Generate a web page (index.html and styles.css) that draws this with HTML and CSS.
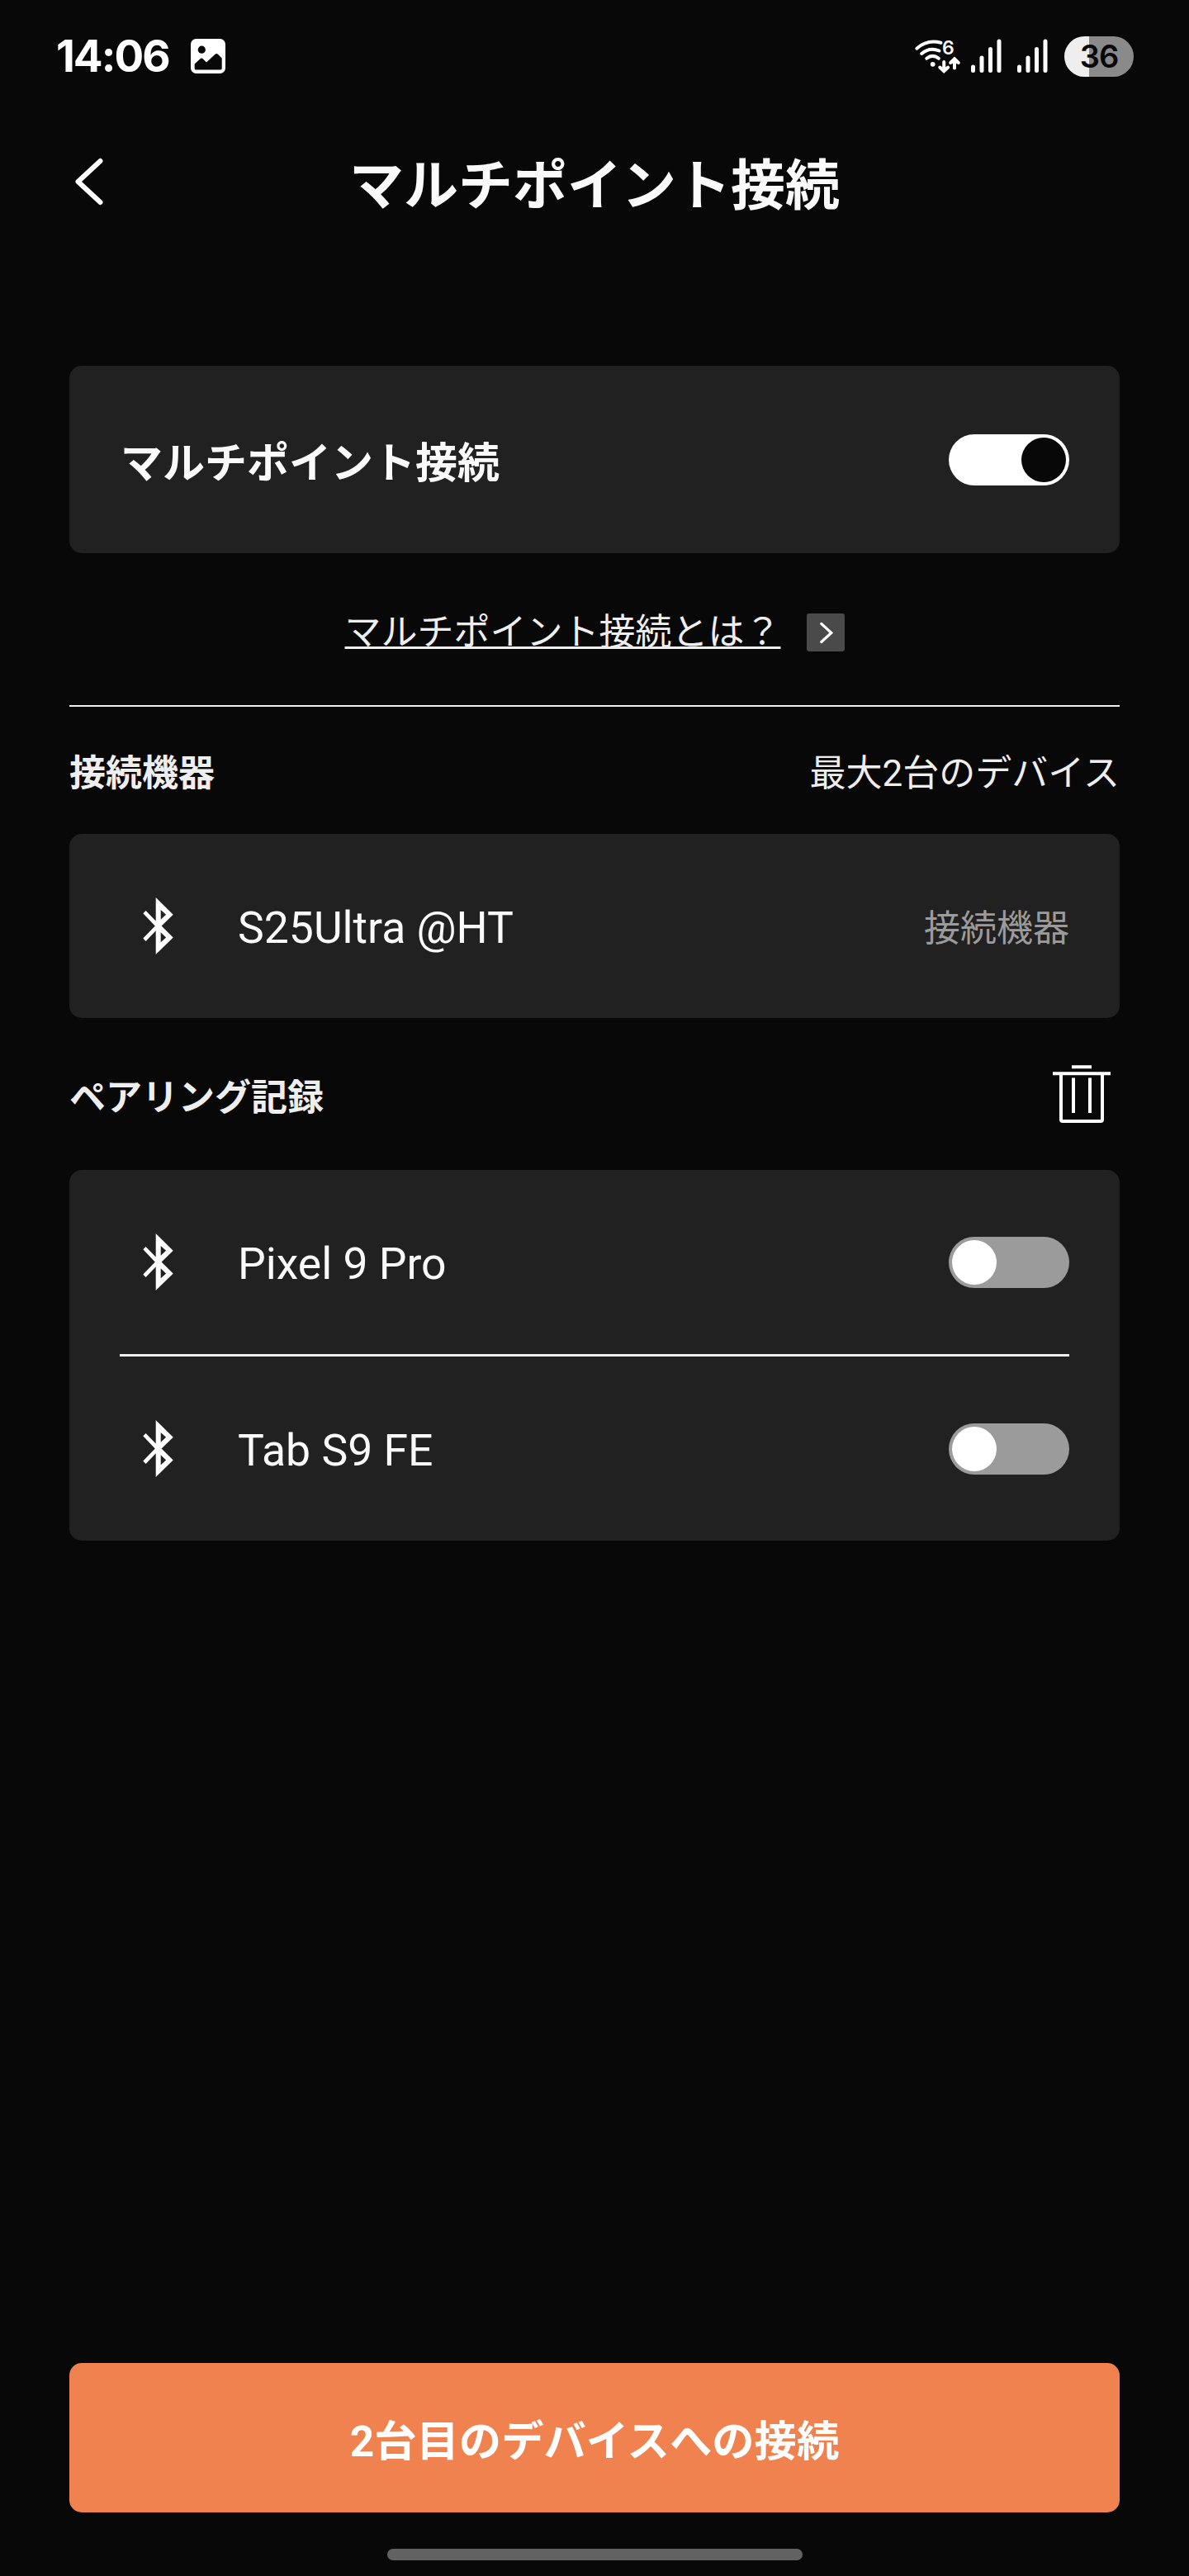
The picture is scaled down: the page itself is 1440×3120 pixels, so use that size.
FILE: index.html
```
<!DOCTYPE html>
<html lang="ja">
<head>
<meta charset="UTF-8">
<meta name="viewport" content="width=device-width, initial-scale=1.0">
<title>マルチポイント接続</title>
<link rel="stylesheet" href="styles.css">
</head>
<body>

<svg class="symbols" width="0" height="0">
    <symbol id="bluetooth" viewBox="0 0 36.4 69">
        <path fill="#fff" fill-rule="evenodd" d="M15.4 0L36.4 20.7 22.3 34.5 36.4 48.5 15.4 69V40.3L3.3 53 0 49.6 14.5 34.5 0 19.3 3.3 16 15.4 28.5ZM21.4 14.9V26.8L27.8 20.7ZM21.4 42.2V54.2L27.8 48.4Z"/>
    </symbol>
    <symbol id="signal" viewBox="0 0 37 42">
        <path stroke="#fff" stroke-width="5" stroke-linecap="round" d="M2.5 34V38.5M13 23V38.5M23.5 12.5V38.5M34 3V38.5"/>
    </symbol>
</svg>

<div class="status-bar">
    <div class="clock">14:06</div>
    <svg class="picture-icon" width="42" height="42" viewBox="0 0 42 42">
        <rect width="42" height="42" rx="6.5" fill="#fff"/>
        <circle cx="13.3" cy="13.2" r="4.6" fill="#080808"/>
        <path fill="#080808" d="M4.7 30.5L11.5 24.2Q13.3 22.8 15 24.4L19 28.4 29.5 18.8Q31.2 17.3 32.9 18.8L37.7 23.5V36Q37.7 37.6 36 37.6H6.4Q4.7 37.6 4.7 36Z"/>
    </svg>
    <div class="status-icons">
        <svg class="wifi" width="55" height="42" viewBox="0 0 55 42" fill="none" stroke="#fff" stroke-width="4" stroke-linecap="round">
            <path d="M2.3 11.7Q15 .5 31.5 4.8"/>
            <path d="M8.2 18Q17.7 9.8 29.5 14.5"/>
            <path d="M14.3 23.7Q21.5 18 28.8 23.7"/>
            <circle cx="21.7" cy="30.8" r="2.9" fill="#fff" stroke="none"/>
            <path d="M35.2 28V39M30.3 34.5L35.2 39.2 40.2 34.5M48 35.5V24.5M43.2 29L48 24.3 52.8 29"/>
            <text class="wifi-gen" x="33" y="18.7">6</text>
        </svg>
        <svg class="signal" width="37" height="42"><use href="#signal"/></svg>
        <svg class="signal" width="37" height="42"><use href="#signal"/></svg>
        <div class="battery">36</div>
    </div>
</div>

<div class="header">
    <svg class="back" width="36" height="58" viewBox="0 0 36 58">
        <path fill="none" stroke="#fff" stroke-width="6" stroke-linecap="round" stroke-linejoin="round" d="M31.5 4L4.5 29 31.5 54"/>
    </svg>
    <h1>マルチポイント接続</h1>
</div>

<div class="content">
    <div class="card">
        <div class="row">
            <div class="label">マルチポイント接続</div>
            <div class="toggle on"></div>
        </div>
    </div>

    <div class="help">
        <a class="help-link">マルチポイント接続とは？</a>
        <svg width="46" height="46" viewBox="0 0 46 46">
            <rect width="46" height="46" rx="3" fill="#4a4a4a"/>
            <path fill="none" stroke="#fff" stroke-width="3.2" stroke-linecap="round" d="M17.8 12.5L29.8 23.5 17.8 34.5"/>
        </svg>
    </div>

    <div class="section-title connected">
        <h2>接続機器</h2>
        <div>最大2台のデバイス</div>
    </div>
    <div class="card">
        <div class="row">
            <svg class="bt" width="37" height="69"><use href="#bluetooth"/></svg>
            <div class="device">S25Ultra @HT</div>
            <div class="state">接続機器</div>
        </div>
    </div>

    <div class="section-title history">
        <h2>ペアリング記録</h2>
        <svg class="trash" width="70" height="70" viewBox="0 0 70 70" fill="none" stroke="#fff" stroke-width="4">
            <path d="M23 2.3H47M0 10.3H70M25 15.5V58M45 15.5V58M10 10V66Q10 68 12 68H58Q60 68 60 66V10"/>
        </svg>
    </div>
    <div class="card">
        <div class="row">
            <svg class="bt" width="37" height="69"><use href="#bluetooth"/></svg>
            <div class="device">Pixel 9 Pro</div>
            <div class="toggle"></div>
        </div>
        <hr>
        <div class="row">
            <svg class="bt" width="37" height="69"><use href="#bluetooth"/></svg>
            <div class="device">Tab S9 FE</div>
            <div class="toggle"></div>
        </div>
    </div>

    <div class="connect-button">2台目のデバイスへの接続</div>
</div>

<div class="nav-handle"></div>

</body>
</html>
```
FILE: styles.css
```
* {
    box-sizing: border-box;
}

body {
    font-family: Roboto, "Noto Sans CJK JP", sans-serif;
    background-color: #080808;
    color: #fafafa;
    display: flex;
    flex-direction: column;
    height: 3120px;
    margin: 0;
}

h1, h2 {
    margin: 0;
    font-weight: bold;
}

svg {
    display: block;
    flex-shrink: 0;
}

.symbols {
    position: absolute;
}

.status-bar {
    display: flex;
    align-items: center;
    height: 136px;
    padding: 0 67px 0 68px;
}

.clock {
    width: 163px;
    font-family: Inter, sans-serif;
    font-size: 53px;
    font-weight: 700;
    line-height: 60px;
    letter-spacing: -2px;
    color: #fff;
}

.status-icons {
    display: flex;
    align-items: center;
    margin-left: auto;
}

.wifi {
    margin-right: 13px;
    overflow: visible;
}

.wifi-gen {
    font-family: Inter, sans-serif;
    font-size: 23px;
    font-weight: 600;
    fill: #fff;
    stroke: none;
}

.signal {
    margin-right: 19px;
}

.battery {
    width: 84px;
    height: 49px;
    margin-left: 1px;
    border-radius: 25px;
    background: linear-gradient(to right, #eee 30px, #8a8a8a 30px);
    color: #080808;
    font-family: Inter, sans-serif;
    font-size: 38px;
    font-weight: 600;
    line-height: 49px;
    letter-spacing: -1px;
    text-align: center;
}

.header {
    display: flex;
    align-items: center;
    height: 168px;
    padding: 0 90px;
}

.header h1 {
    flex: 1;
    margin-right: 36px;
    padding-top: 12px;
    font-size: 66px;
    line-height: 80px;
    text-align: center;
}

.content {
    display: flex;
    flex-direction: column;
    height: 2739px;
    padding: 139px 84px 0;
}

.card {
    background-color: #212121;
    border-radius: 15px;
    padding: 0 61px;
}

.row {
    display: flex;
    align-items: center;
    height: 223px;
}

.card:first-child .row {
    height: 227px;
}

.card hr {
    height: 3px;
    margin: 0;
    border: none;
    background-color: #f0f0f0;
}

.label {
    padding-top: 11px;
    padding-left: 1px;
    font-size: 51px;
    font-weight: bold;
    line-height: 60px;
}

.toggle {
    width: 146px;
    height: 62px;
    margin-left: auto;
    padding: 4px;
    border-radius: 31px;
    background-color: #9b9b9b;
}

.toggle::before {
    content: "";
    display: block;
    width: 54px;
    height: 54px;
    border-radius: 50%;
    background-color: #fff;
}

.toggle.on {
    background-color: #fff;
}

.toggle.on::before {
    margin-left: auto;
    background-color: #080808;
}

.help {
    display: flex;
    align-items: center;
    justify-content: center;
    gap: 31px;
    height: 186px;
    padding-top: 8px;
    border-bottom: 2px solid #eee;
    color: #eee;
}

.help-link {
    font-size: 44px;
    line-height: 60px;
    text-decoration: underline;
    text-decoration-thickness: 3px;
    text-decoration-skip-ink: none;
    text-underline-offset: 2px;
}

.section-title {
    display: flex;
    align-items: center;
    justify-content: space-between;
    font-size: 44px;
    line-height: 60px;
    color: #eee;
}

.section-title h2 {
    font-size: 44px;
}

.connected {
    height: 154px;
    padding-top: 8px;
}

.history {
    height: 184px;
    padding-top: 9px;
}

.trash {
    margin-right: 11px;
    margin-bottom: 9px;
}

.bt {
    margin: 0 78px 0 28px;
}

.device {
    padding-top: 5px;
    font-size: 53.5px;
    line-height: 70px;
}

.state {
    margin-left: auto;
    padding-top: 7px;
    font-size: 44px;
    line-height: 60px;
    color: #9b9b9b;
}

.connect-button {
    height: 181px;
    margin-top: auto;
    padding-top: 10px;
    border-radius: 15px;
    background-color: #ef824e;
    color: #fff;
    font-size: 51.33px;
    font-weight: bold;
    line-height: 171px;
    text-align: center;
}

.nav-handle {
    width: 503px;
    height: 14px;
    margin: 44px auto 0;
    border-radius: 7px;
    background-color: #626262;
}
```
